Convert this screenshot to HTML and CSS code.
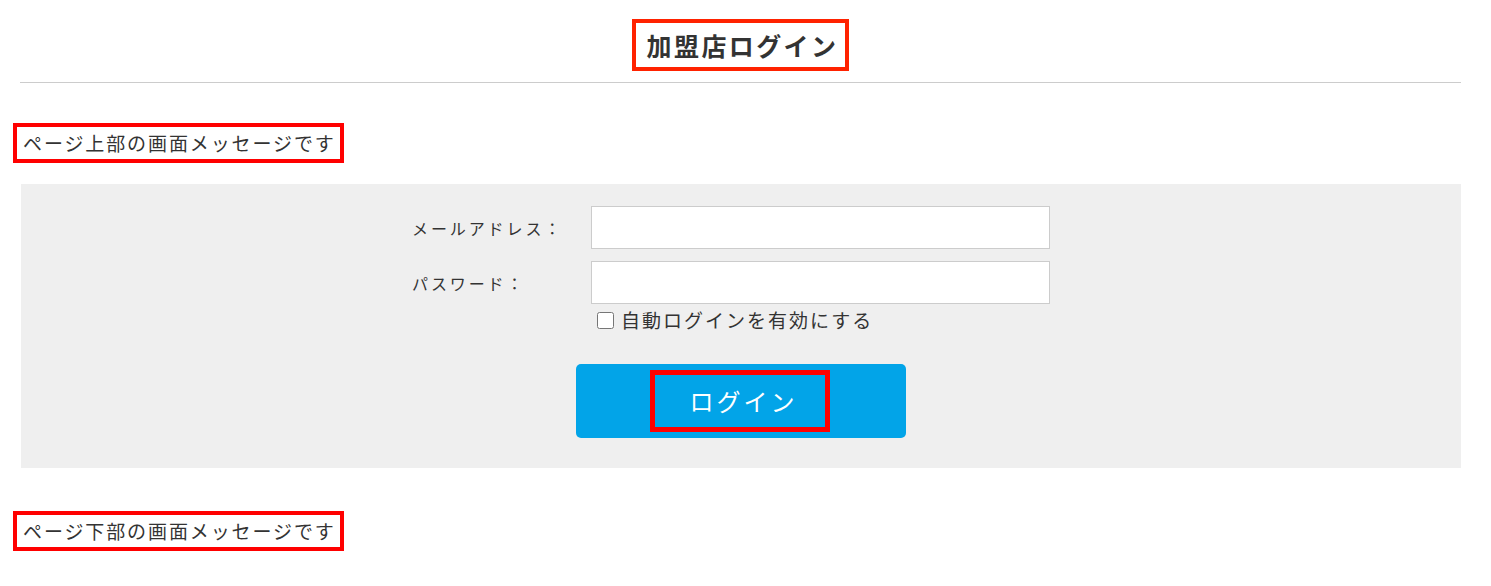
FILE: index.html
```html
<!DOCTYPE html>
<html lang="ja">
<head>
<meta charset="utf-8">
<title>加盟店ログイン</title>
<link rel="stylesheet" href="styles.css">
</head>
<body>
<div class="page">
  <header class="title-bar">
    <h1 class="title"><span class="mark mark-title">加盟店ログイン</span></h1>
  </header>

  <p class="msg"><span class="mark mark-msg">ページ上部の画面メッセージです</span></p>

  <section class="panel">
    <form class="login-form">
      <div class="row">
        <label class="label" for="email">メールアドレス：</label>
        <input class="field" id="email" type="text">
      </div>
      <div class="row">
        <label class="label" for="pw">パスワード：</label>
        <input class="field" id="pw" type="password">
      </div>
      <div class="row row-check">
        <span></span>
        <label class="check"><input type="checkbox" class="checkbox">自動ログインを有効にする</label>
      </div>
      <div class="actions">
        <button type="button" class="btn"><span class="mark mark-btn">ログイン</span></button>
      </div>
    </form>
  </section>

  <p class="msg msg-bottom"><span class="mark mark-msg">ページ下部の画面メッセージです</span></p>
</div>
</body>
</html>
```

FILE: styles.css
```css
html, body {
  margin: 0;
  padding: 0;
  background: #fff;
}
body {
  font-family: "Noto Sans CJK JP", "Noto Sans", sans-serif;
  color: #333;
}
.page {
  padding-top: 19px;
}
.title-bar {
  margin: 0 30px 0 20px;
  padding-bottom: 11px;
  border-bottom: 1px solid #cccccc;
  text-align: center;
}
.title {
  margin: 0;
  font-size: 25px;
  font-weight: bold;
  letter-spacing: 2.4px;
  line-height: 40px;
}
.mark {
  display: inline-block;
  border-style: solid;
  border-color: #ff0000;
}
.mark-title {
  border-width: 4px;
  border-color: #ff2200;
  padding: 2px 7px 2px 11px;
  line-height: 40px;
}
.msg {
  margin: 40px 0 0 13px;
  font-size: 19px;
  letter-spacing: 1.9px;
  line-height: 32px;
}
.mark-msg {
  border-width: 4px;
  padding: 0 4px 0 6px;
}
.panel {
  margin: 21px 30px 0 21px;
  background: #efefef;
  padding: 22px 0 30px;
}
.login-form {
  width: 660px;
  margin: 0 auto;
}
.row {
  display: grid;
  grid-template-columns: 180px 459px;
  align-items: center;
  margin-bottom: 12px;
}
.label {
  padding-left: 1px;
  font-size: 16px;
  letter-spacing: 2.9px;
}
.field {
  box-sizing: border-box;
  width: 459px;
  height: 43px;
  border: 1px solid #cccccc;
  background: #fff;
  margin: 0;
}
.row-check {
  margin-top: -11px;
  margin-bottom: 0;
}
.check {
  display: flex;
  align-items: center;
  font-size: 19px;
  line-height: 30px;
  letter-spacing: 2px;
}
.checkbox {
  width: 17px;
  height: 17px;
  margin: 0 7px 0 6px;
}
.actions {
  display: flex;
  justify-content: center;
  margin-top: 29px;
}
.btn {
  width: 330px;
  height: 74px;
  padding: 6px 0;
  border: none;
  border-radius: 5px;
  background: #02a4e8;
  color: #fff;
  font-family: inherit;
  font-size: 24px;
  letter-spacing: 3px;
  display: flex;
  justify-content: center;
  align-items: center;
}
.mark-btn {
  border-width: 5px;
  padding: 0 27px 0 35px;
  margin-right: 3px;
  line-height: 52px;
}
.msg-bottom {
  margin-top: 43px;
}
```
